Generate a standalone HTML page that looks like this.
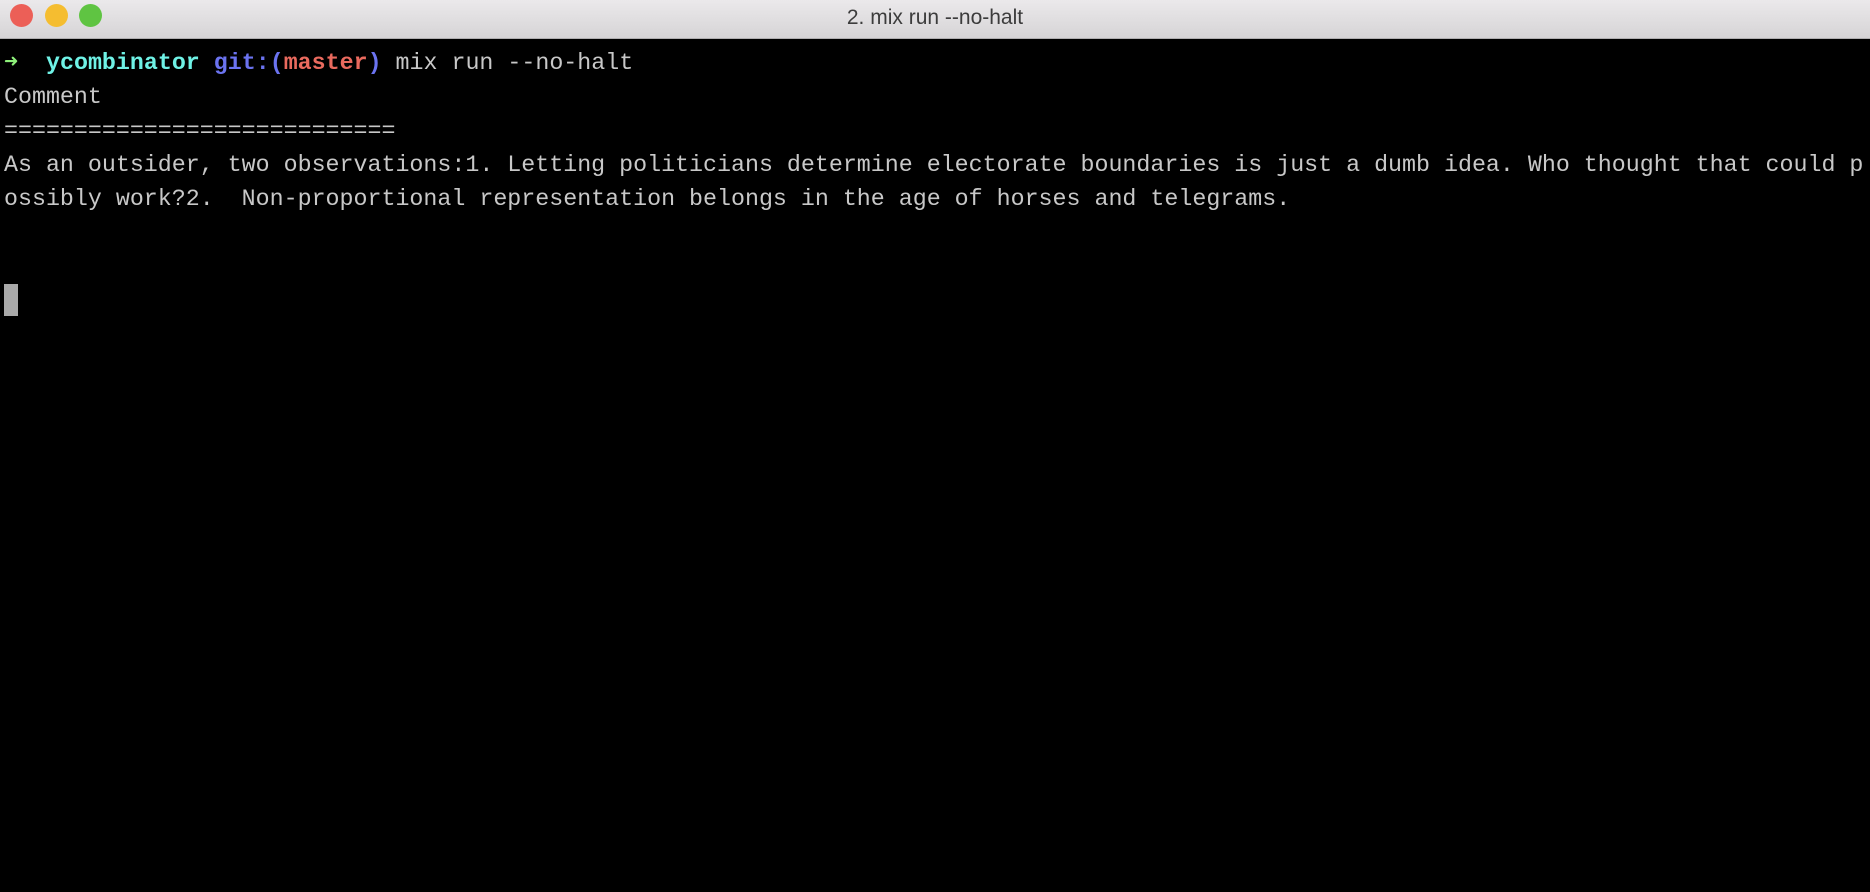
<!DOCTYPE html>
<html><head><meta charset="utf-8"><style>
html,body{margin:0;padding:0;width:1870px;height:892px;background:#000;overflow:hidden}
.bar{position:absolute;left:0;top:0;width:1870px;height:38px;background:linear-gradient(#ebe9eb,#d6d4d6);border-bottom:1px solid #b0aeb0}
.dot{position:absolute;top:4px;width:23px;height:23px;border-radius:50%}
.title{position:absolute;top:0;left:0;width:1870px;text-align:center;font-family:"Liberation Sans",sans-serif;font-size:21px;line-height:36px;color:#3c3c3c}
.l{position:absolute;left:4px;font-family:"Liberation Mono",monospace;font-size:23.3px;color:#c8c8c8;white-space:pre;line-height:33px}
.cur{position:absolute;left:4px;top:284px;width:14px;height:32px;background:#a9a9a9}
</style></head><body>
<div class="bar">
<div class="dot" style="left:10px;background:#ec5f57"></div>
<div class="dot" style="left:45px;background:#f5bd30"></div>
<div class="dot" style="left:79px;background:#5fc442"></div>
<div class="title">2. mix run --no-halt</div>
</div>
<div class="l" style="top:47px"><b style="color:#8ef07a">➜</b>  <b style="color:#6ff2e6">ycombinator</b> <b style="color:#6b73f0">git:(</b><b style="color:#ea6a5e">master</b><b style="color:#6b73f0">)</b> mix run --no-halt</div>
<div class="l" style="top:81px">Comment</div>
<div class="l" style="top:115px">============================</div>
<div class="l" style="top:149px">As an outsider, two observations:1. Letting politicians determine electorate boundaries is just a dumb idea. Who thought that could p</div>
<div class="l" style="top:183px">ossibly work?2.  Non-proportional representation belongs in the age of horses and telegrams.</div>
<div class="cur"></div>
</body></html>
